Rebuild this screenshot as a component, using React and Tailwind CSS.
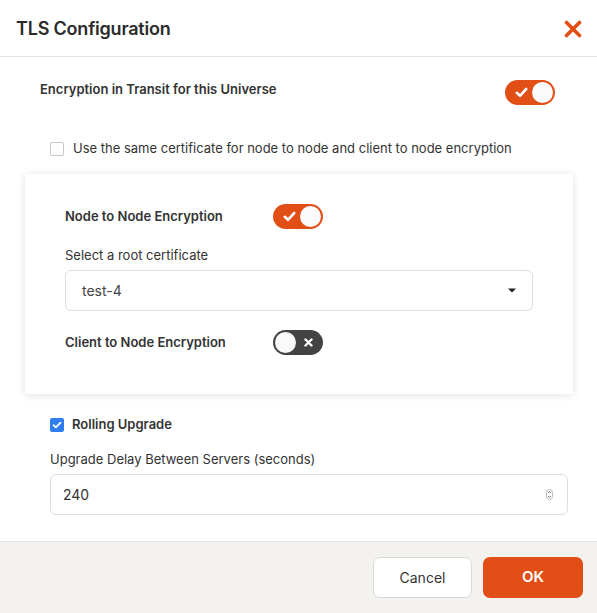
import React, { useState } from "react";

const Toggle = ({ on, onChange }) => (
  <button
    type="button"
    onClick={() => onChange(!on)}
    className={`relative w-[50px] h-[25px] rounded-full shrink-0 ${
      on ? "bg-[#e14e16]" : "bg-[#434343]"
    }`}
  >
    {on ? (
      <svg
        className="absolute left-[10px] top-[7px]"
        width="13"
        height="11"
        viewBox="0 0 13 11"
      >
        <path
          d="M1.8 5.8 L5 8.8 L11.2 2"
          fill="none"
          stroke="white"
          strokeWidth="2.6"
          strokeLinecap="round"
          strokeLinejoin="round"
        />
      </svg>
    ) : (
      <svg
        className="absolute right-[10px] top-[8px]"
        width="9"
        height="9"
        viewBox="0 0 9 9"
      >
        <path
          d="M1.5 1.5 L7.5 7.5 M7.5 1.5 L1.5 7.5"
          stroke="white"
          strokeWidth="2.4"
          strokeLinecap="round"
        />
      </svg>
    )}
    <span
      className={`absolute top-[2px] w-[21px] h-[21px] rounded-full bg-[#fafafa] ${
        on ? "right-[2px]" : "left-[2px]"
      }`}
    />
  </button>
);

const Checkbox = ({ checked, onChange }) => (
  <button
    type="button"
    onClick={() => onChange(!checked)}
    className={`w-[14px] h-[14px] rounded-[2px] shrink-0 flex items-center justify-center ${
      checked ? "bg-[#2f7ff0]" : "bg-white border border-[#c8c8c8]"
    }`}
  >
    {checked && (
      <svg width="10" height="8" viewBox="0 0 10 8">
        <path
          d="M1.5 4.2 L3.9 6.4 L8.5 1.6"
          fill="none"
          stroke="white"
          strokeWidth="1.8"
          strokeLinecap="round"
          strokeLinejoin="round"
        />
      </svg>
    )}
  </button>
);

const App = () => {
  const [transit, setTransit] = useState(true);
  const [sameCert, setSameCert] = useState(false);
  const [nodeToNode, setNodeToNode] = useState(true);
  const [clientToNode, setClientToNode] = useState(false);
  const [rolling, setRolling] = useState(true);
  const [delay, setDelay] = useState("240");

  return (
    <div
      className="w-full h-[613px] bg-white flex flex-col text-[#333]"
      style={{ fontFamily: "Inter, 'Noto Sans', sans-serif" }}
    >
      {/* header */}
      <div className="h-[57px] shrink-0 border-b border-[#e3e3e3] flex items-center justify-between pl-4 pr-[15px]">
        <h2 className="text-[18px] font-semibold text-[#2b2b2b] tracking-[-0.2px]">
          TLS Configuration
        </h2>
        <button type="button" className="mt-[1px]">
          <svg width="18" height="18" viewBox="0 0 18 18">
            <path
              d="M2.5 2.5 L15.5 15.5 M15.5 2.5 L2.5 15.5"
              stroke="#e14e16"
              strokeWidth="3.6"
              strokeLinecap="round"
            />
          </svg>
        </button>
      </div>

      {/* body */}
      <div className="flex-1 flex flex-col">
        <div className="flex items-start justify-between pl-10 pr-[42px] pt-[22px]">
          <span className="text-[13px] font-semibold leading-5">
            Encryption in Transit for this Universe
          </span>
          <div className="mt-[1px]">
            <Toggle on={transit} onChange={setTransit} />
          </div>
        </div>

        <label className="flex items-center gap-[9px] pl-[50px] mt-[28px] h-5">
          <Checkbox checked={sameCert} onChange={setSameCert} />
          <span className="text-[13px] text-[#333]">
            Use the same certificate for node to node and client to node
            encryption
          </span>
        </label>

        <div className="ml-[25px] mr-[24px] mt-[15px] bg-white shadow-[0_1px_8px_rgba(0,0,0,0.12)] pl-10 pr-10 pt-[30px] pb-[39px]">
          <div className="flex items-center">
            <span className="w-[208px] text-[13px] font-semibold">
              Node to Node Encryption
            </span>
            <Toggle on={nodeToNode} onChange={setNodeToNode} />
          </div>
          <div className="mt-[16px] text-[13px] leading-5">
            Select a root certificate
          </div>
          <div className="mt-[5px] h-[41px] border border-[#dedede] rounded-[6px] flex items-center justify-between pl-4 pr-4">
            <span className="text-[14px] text-[#444]">test-4</span>
            <svg width="8" height="5" viewBox="0 0 8 5">
              <path d="M0 0.5 H8 L4 4.5 Z" fill="#222" />
            </svg>
          </div>
          <div className="flex items-center mt-[19px]">
            <span className="w-[208px] text-[13px] font-semibold">
              Client to Node Encryption
            </span>
            <Toggle on={clientToNode} onChange={setClientToNode} />
          </div>
        </div>

        <label className="flex items-center gap-[8px] pl-[50px] mt-[21px] h-5">
          <Checkbox checked={rolling} onChange={setRolling} />
          <span className="text-[13px] font-semibold">Rolling Upgrade</span>
        </label>

        <div className="pl-[50px] pr-[29px] mt-[14px]">
          <div className="text-[13px] leading-5">
            Upgrade Delay Between Servers (seconds)
          </div>
          <div className="mt-[5px] h-[41px] border border-[#dedede] rounded-[6px] flex items-center justify-between pl-[12px] pr-[14px]">
            <input
              value={delay}
              onChange={(e) => setDelay(e.target.value)}
              className="text-[14px] text-[#333] outline-none flex-1 bg-transparent"
            />
            <svg width="7" height="11" viewBox="0 0 7 11">
              <rect
                x="0.5"
                y="0.5"
                width="6"
                height="10"
                rx="3"
                fill="none"
                stroke="#bbb"
              />
              <path
                d="M2 4 L3.5 2.6 L5 4 M2 7 L3.5 8.4 L5 7"
                fill="none"
                stroke="#555"
                strokeWidth="0.8"
              />
            </svg>
          </div>
        </div>
      </div>

      {/* footer */}
      <div className="h-[72px] shrink-0 bg-[#f3f2ee] border-t border-[#e2e2e2] flex items-center justify-end gap-[11px] pr-[14px]">
        <button
          type="button"
          className="w-[99px] h-[41px] bg-white border border-[#d8d8d8] rounded-[7px] text-[14px] text-[#333]"
        >
          Cancel
        </button>
        <button
          type="button"
          className="w-[100px] h-[41px] bg-[#e14e16] rounded-[7px] text-[15px] font-semibold text-white"
        >
          OK
        </button>
      </div>
    </div>
  );
};

export default App;
